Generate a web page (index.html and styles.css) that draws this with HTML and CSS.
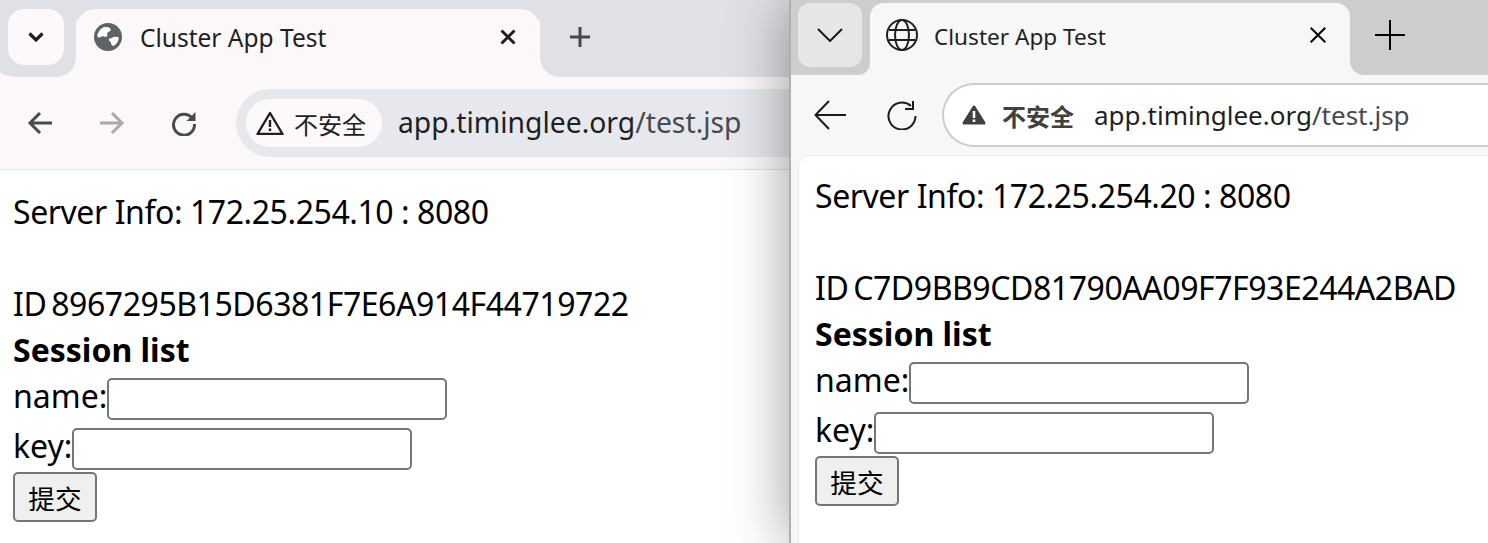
FILE: index.html
```html
<!DOCTYPE html>
<html lang="en">
<head>
	<meta charset="UTF-8">
	<title>Cluster App Test</title>
	<link rel="stylesheet" href="styles.css">
</head>
<body>
	<div class="win win-chrome">
		<div class="strip">
			<div class="strip-left">
				<div class="tab-list">
					<svg width="16" height="10" viewBox="0 0 16 10"><path d="M1.500 1.500L8 8l6.500-6.500" fill="none" stroke="#1f1f1f" stroke-width="3.200"/></svg>
				</div>
			</div>
			<div class="tab">
				<svg class="favicon" width="28" height="28" viewBox="0 0 28 28">
					<circle cx="14" cy="14" r="14" fill="#5f6368"/>
					<path d="M3.300 12.300C4 9.500 5.500 7 7.500 5.500 10 3.700 13.500 3.700 15.700 5c1.500 1 1.500 2.500 0 3.200-1.500.7-2.700 1-2.500 2.800.2 1.800.3 3-1.500 2.800-1.500-.2-2-1-3.500-.5-1.300.5-2.500 1.500-3.500 1.300-1-.2-1.300-1-1.400-2.300z" fill="#fff"/>
					<path d="M14.700 16.700c.2-1.500 2-1.200 3-1.700 1.500-.8 3.500-1.500 5.500-1 1.500.3 1.800 1 1.300 2.500-.5 2-1.800 4.500-3.800 5.700-1.500 1-2.700.8-3.200-.5-.3-1-.2-2-1.200-3-.7-.8-1.700-1.200-1.600-2z" fill="#fff"/>
				</svg>
				<span class="tab-title">Cluster App Test</span>
				<svg class="tab-close" width="16" height="16" viewBox="0 0 16 16"><path d="M1.500 1.500l13 13M14.500 1.500l-13 13" stroke="#1f1f1f" stroke-width="3"/></svg>
			</div>
			<div class="strip-right">
				<svg class="new-tab" width="20" height="20" viewBox="0 0 20 20"><path d="M10 0v20M0 10h20" stroke="#474747" stroke-width="3"/></svg>
			</div>
		</div>
		<div class="toolbar">
			<div class="tool">
				<svg width="26" height="26" viewBox="0 0 26 26"><path d="M25 13H3M13 3L3 13l10 10" fill="none" stroke="#474a4f" stroke-width="3"/></svg>
			</div>
			<div class="tool">
				<svg width="26" height="26" viewBox="0 0 26 26"><path d="M1 13h22M13 3l10 10-10 10" fill="none" stroke="#a9a9ab" stroke-width="3"/></svg>
			</div>
			<div class="tool">
				<svg width="26" height="26" viewBox="0 0 26 26"><path d="M21.500 8.500A10.500 10.500 0 1 0 23.500 14" fill="none" stroke="#474a4f" stroke-width="3"/><path d="M24.500 2v9h-9z" fill="#474a4f"/></svg>
			</div>
			<div class="omnibox">
				<div class="chip">
					<svg width="28" height="24" viewBox="0 0 28 24"><path d="M14 2L1.500 23h25z" fill="none" stroke="#1f1f1f" stroke-width="2.400" stroke-linejoin="round"/><path d="M14 9v7M14 17.500v2.500" stroke="#1f1f1f" stroke-width="2.400"/></svg>
					<span>不安全</span>
				</div>
				<div class="url"><span class="host">app.timinglee.org</span>/test.jsp</div>
			</div>
		</div>
		<div class="page">
			<p class="info">Server Info: 172.25.254.10 : 8080</p>
			<p>&nbsp;</p>
			<p class="sid">ID 8967295B15D6381F7E6A914F44719722</p>
			<p><b>Session list</b></p>
			<form>
				<label class="field">name:<input type="text"></label>
				<label class="field">key:<input type="text"></label>
				<button type="button">提交</button>
			</form>
		</div>
	</div>

	<div class="win win-edge">
		<div class="strip">
			<div class="strip-left">
				<div class="tab-list">
					<svg width="26" height="14" viewBox="0 0 26 14"><path d="M1 1l12 12L25 1" fill="none" stroke="#1a1a1a" stroke-width="2"/></svg>
				</div>
			</div>
			<div class="tab">
				<svg class="favicon" width="32" height="32" viewBox="0 0 32 32" fill="none" stroke="#1f1f1f" stroke-width="2">
					<circle cx="16" cy="16" r="15"/>
					<ellipse cx="16" cy="16" rx="7" ry="15"/>
					<path d="M3 11h26M3 21h26"/>
				</svg>
				<span class="tab-title">Cluster App Test</span>
				<svg class="tab-close" width="16" height="16" viewBox="0 0 16 16"><path d="M.7.700l14.600 14.600M15.300.700L.7 15.300" stroke="#000" stroke-width="2"/></svg>
			</div>
			<div class="strip-right">
				<svg class="new-tab" width="30" height="30" viewBox="0 0 30 30"><path d="M15 0v30M0 15h30" stroke="#000" stroke-width="2"/></svg>
			</div>
		</div>
		<div class="toolbar">
			<div class="tool">
				<svg width="32" height="30" viewBox="0 0 32 30"><path d="M32 15H2M15 1L1.500 15 15 29" fill="none" stroke="#1a1a1a" stroke-width="2"/></svg>
			</div>
			<div class="tool">
				<svg width="30" height="30" viewBox="0 0 30 30"><path d="M24 6A13.500 13.500 0 1 0 28.500 16" fill="none" stroke="#1a1a1a" stroke-width="2"/><path d="M26 1v8h-8" fill="none" stroke="#1a1a1a" stroke-width="2"/></svg>
			</div>
			<div class="omnibox">
				<svg width="24" height="20" viewBox="0 0 24 20"><path d="M12 2L2 18h20z" fill="#404040" stroke="#404040" stroke-width="3" stroke-linejoin="round"/><path d="M12 6v7M12 14.500v2.500" stroke="#fff" stroke-width="2.600"/></svg>
				<span class="warn">不安全</span>
				<div class="url"><span class="host">app.timinglee.org</span>/test.jsp</div>
			</div>
		</div>
		<div class="page">
			<p class="info">Server Info: 172.25.254.20 : 8080</p>
			<p>&nbsp;</p>
			<p class="sid">ID C7D9BB9CD81790AA09F7F93E244A2BAD</p>
			<p><b>Session list</b></p>
			<form>
				<label class="field">name:<input type="text"></label>
				<label class="field">key:<input type="text"></label>
				<button type="button">提交</button>
			</form>
		</div>
	</div>
</body>
</html>
```
FILE: styles.css
```css
*{
	margin: 0;
	padding: 0;
	box-sizing: border-box;
}
body{
	display: flex;
	height: 543px;
	overflow: hidden;
	background: #fff;
	font-family: "Noto Sans", "Noto Sans CJK SC", sans-serif;
}
.win{
	display: flex;
	flex-direction: column;
	flex: none;
	height: 543px;
}
.strip{
	display: flex;
	flex: none;
}
.strip-left{
	display: flex;
	flex: none;
}
.tab{
	display: flex;
	flex: none;
	align-items: center;
}
.tab-title{
	flex: 1;
	color: #1f1f1f;
	white-space: nowrap;
}
.strip-right{
	display: flex;
	flex: 1;
	align-items: flex-start;
}
.toolbar{
	display: flex;
	flex: none;
	align-items: center;
}
.tool{
	display: flex;
	flex: none;
	width: 72px;
	justify-content: center;
}
.omnibox{
	display: flex;
	flex: 1;
	align-items: center;
}
.chip{
	display: flex;
	align-items: center;
}
.url{
	white-space: nowrap;
	color: #474a4f;
}
.host{
	color: #1f1f1f;
}
.page{
	flex: 1;
	background: #fff;
	font-size: 32px;
	line-height: 46px;
	color: #000;
}
.page p{
	white-space: nowrap;
}
.page .info{
	letter-spacing: -.43px;
}
.page .sid{
	letter-spacing: -.44px;
	word-spacing: -3px;
}
.field{
	display: flex;
	height: 50px;
	white-space: nowrap;
}
.field input{
	width: 340px;
	height: 42px;
	margin-top: 5px;
	border: 2px solid #767676;
	border-radius: 5px;
	background: #fff;
}
form button{
	display: block;
	width: 84px;
	height: 50px;
	margin-top: -1px;
	border: 2px solid #767676;
	border-radius: 5px;
	background: #efefef;
	font-family: "Noto Sans CJK SC", sans-serif;
	font-size: 26.67px;
	color: #000;
}

/* left window */
.win-chrome{
	width: 900px;
	background: #fcf8f9;
}
.win-chrome .strip{
	height: 77px;
	background: linear-gradient(#e0e1e6 0 20px, #fcf8f9 20px);
}
.win-chrome .strip-left{
	width: 76px;
	padding: 9px 0 0 8px;
	background: #e0e1e6;
	border-bottom-right-radius: 20px;
	border-bottom-left-radius: 20px 6px;
}
.win-chrome .tab-list{
	display: flex;
	width: 56px;
	height: 56px;
	align-items: center;
	justify-content: center;
	background: #fdf9fa;
	border-radius: 16px;
}
.win-chrome .tab{
	width: 464px;
	height: 68px;
	margin-top: 9px;
	padding: 0 24px 0 18px;
	background: #fcf8f9;
	border-radius: 20px 20px 0 0;
}
.win-chrome .favicon{
	margin: -12px 18px 0 0;
}
.win-chrome .tab-title{
	margin-bottom: 12px;
	font-size: 24.500px;
}
.win-chrome .tab-close{
	margin-top: -12px;
}
.win-chrome .strip-right{
	padding: 27px 0 0 30px;
	background: #e0e1e6;
	border-bottom-left-radius: 20px;
}
.win-chrome .toolbar{
	height: 92px;
	padding-left: 4px;
}
.win-chrome .omnibox{
	height: 68px;
	margin-left: 16px;
	padding-left: 10px;
	background: #e7e8ed;
	border-radius: 34px 0 0 34px;
}
.win-chrome .chip{
	height: 48px;
	width: 136px;
	padding-left: 10px;
	background: #fdf9fa;
	border-radius: 24px;
	font-size: 24px;
	color: #1f1f1f;
	font-family: "Noto Sans CJK SC", sans-serif;
}
.win-chrome .chip svg{
	margin-right: 10px;
}
.win-chrome .url{
	margin: 0 0 2px 16px;
	font-size: 28.300px;
}
.win-chrome .page{
	padding: 19px 0 0 13px;
	border-top: 1px solid #e5e2e3;
}

/* right window, lies over the left one */
.win-edge{
	position: relative;
	width: 699px;
	margin-left: -111px;
	padding-left: 2px;
	background: #f7f7f7;
	border-top-left-radius: 12px;
	box-shadow: 0 0 60px rgba(0,0,0,.4);
}
.win-edge::before{
	content: "";
	position: absolute;
	top: 0;
	bottom: 0;
	left: 0;
	width: 2px;
	background: #b0b0b0;
	border-top-left-radius: 12px;
}
.win-edge .strip{
	height: 75px;
	background: linear-gradient(#cdcdcd 0 20px, #f7f7f7 20px);
}
.win-edge .strip-left{
	width: 79px;
	padding: 3px 0 0 7px;
	background: #cdcdcd;
	border-bottom-right-radius: 12px;
}
.win-edge .tab-list{
	display: flex;
	width: 64px;
	height: 64px;
	align-items: center;
	justify-content: center;
	background: #e6e6e6;
	border-radius: 12px;
}
.win-edge .tab{
	width: 480px;
	height: 72px;
	margin-top: 3px;
	padding: 0 24px 0 16px;
	background: #f7f7f7;
	border-radius: 14px 14px 0 0;
}
.win-edge .favicon{
	margin: -8px 16px 0 0;
}
.win-edge .tab-title{
	margin-bottom: 6px;
	font-size: 22.600px;
}
.win-edge .tab-close{
	margin-top: -8px;
}
.win-edge .strip-right{
	padding: 20px 0 0 25px;
	background: #cdcdcd;
	border-bottom-left-radius: 14px;
}
.win-edge .toolbar{
	height: 80px;
	padding-left: 3px;
}
.win-edge .omnibox{
	height: 64px;
	margin-left: 4px;
	padding-left: 18px;
	background: #fff;
	border: 2px solid #ccc;
	border-right: 0;
	border-radius: 32px 0 0 32px;
}
.win-edge .warn{
	margin-left: 16px;
	font-family: "Noto Sans CJK SC", sans-serif;
	font-size: 24px;
	font-weight: 700;
	color: #404040;
}
.win-edge .url{
	margin-left: 20px;
	font-size: 26px;
}
.win-edge .page{
	margin-left: 7px;
	padding: 17px 0 0 16px;
	border-top-left-radius: 12px;
	border-top: 1px solid #eee;
	border-left: 1px solid #eee;
}
```
